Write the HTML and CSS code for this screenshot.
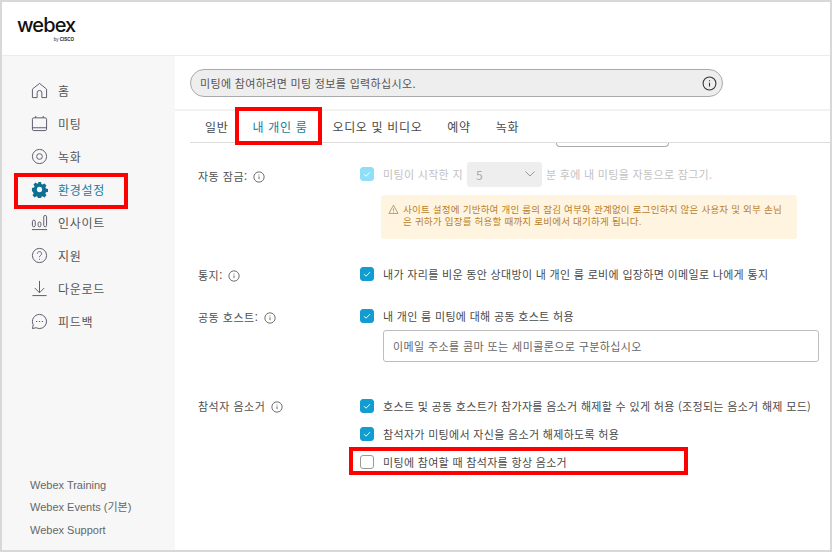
FILE: index.html
```html
<!DOCTYPE html>
<html lang="ko">
<head>
<meta charset="utf-8">
<title>Webex</title>
<link rel="stylesheet" href="styles.css">
</head>
<body>
<div class="app">
  <header class="top">
    <div class="logo"><span class="logo-word">webex</span><span class="logo-by">by <b>CISCO</b></span></div>
  </header>
  <aside class="side">
    <nav class="nav">
      <a class="nav-item"><svg class="nav-icon" viewBox="0 0 18 18"><path d="M1.500 16.500V7.500L9 1.500l7.500 6v9h-5v-5a2.500 2.500 0 0 0-5 0v5z"/></svg>홈</a>
      <a class="nav-item"><svg class="nav-icon" viewBox="0 0 18 18"><rect x="1.500" y="3" width="15" height="13.500" rx="1.500"/><path d="M1.500 13.500h15M5 1v2M13 1v2"/></svg>미팅</a>
      <a class="nav-item"><svg class="nav-icon" viewBox="0 0 18 18"><circle cx="9" cy="9" r="7.500"/><circle cx="9" cy="9" r="3"/></svg>녹화</a>
      <a class="nav-item active"><svg class="nav-icon gear" viewBox="0 0 18 18"><path fill-rule="evenodd" d="M7.400 1h3.200l.4 2.200 1.300.6 1.900-1.200 2.200 2.200-1.200 1.900.6 1.300 2.200.4v3.200l-2.200.4-.6 1.300 1.200 1.900-2.200 2.200-1.900-1.200-1.300.6-.4 2.200H7.400l-.4-2.200-1.300-.6-1.900 1.200-2.200-2.200 1.200-1.900-.6-1.300L1 10.600V7.400l2.200-.4.6-1.300-1.200-1.900 2.200-2.200 1.900 1.200 1.300-.6zM9 6.200a2.800 2.800 0 1 0 0 5.600 2.800 2.800 0 0 0 0-5.600z"/></svg>환경설정</a>
      <a class="nav-item"><svg class="nav-icon" viewBox="0 0 18 18"><path d="M1 16.500h16"/><rect x="1.500" y="6.500" width="3" height="7" rx="1.500"/><rect x="7.500" y="8.500" width="3" height="5" rx="1.500"/><rect x="13.500" y="1.500" width="3" height="12" rx="1.500"/></svg>인사이트</a>
      <a class="nav-item"><svg class="nav-icon" viewBox="0 0 18 18"><circle cx="9" cy="9" r="7.500"/><path d="M6.800 7a2.200 2.200 0 1 1 3.400 1.900c-.8.500-1.200 1-1.200 1.900"/><path d="M9 12.500v1"/></svg>지원</a>
      <a class="nav-item"><svg class="nav-icon" viewBox="0 0 18 18"><path d="M9 1v12.500M4 8.500l5 5 5-5M1.500 16.500h15"/></svg>다운로드</a>
      <a class="nav-item"><svg class="nav-icon" viewBox="0 0 18 18"><path d="M9 1.500a7.500 7.500 0 1 1-3.600 14.100L1.500 16.500l.9-3.900A7.500 7.500 0 0 1 9 1.500z"/><path class="dots" d="M5.800 9h.3M8.850 9h.3M11.900 9h.3"/></svg>피드백</a>
    </nav>
    <div class="side-links">
      <a>Webex Training</a>
      <a>Webex Events (기본)</a>
      <a>Webex Support</a>
    </div>
  </aside>
  <main class="main">
    <div class="search-wrap">
      <div class="search">
        <span>미팅에 참여하려면 미팅 정보를 입력하십시오.</span>
        <svg class="info info-lg" viewBox="0 0 14 14"><circle cx="7" cy="7" r="6"/><path d="M7 6.300v3.500M7 4v1"/></svg>
      </div>
    </div>
    <div class="tabs">
      <a class="tab">일반</a>
      <a class="tab tab-on">내 개인 룸</a>
      <a class="tab">오디오 및 비디오</a>
      <a class="tab">예약</a>
      <a class="tab">녹화</a>
    </div>
    <div class="content">
      <div class="peek"></div>
      <section class="row row-lock">
        <div class="label">자동 잠금: <svg class="info" viewBox="0 0 14 14"><circle cx="7" cy="7" r="6"/><path d="M7 6.300v3.200M7 4.200v1"/></svg></div>
        <div class="field">
          <div class="check-line off">
            <span class="box on dim"><svg viewBox="0 0 14 14"><path d="M3.500 7.200l2.400 2.400 4.600-4.800"/></svg></span>
            <span>미팅이 시작한 지</span>
            <span class="select"><span>5</span><svg viewBox="0 0 12 12"><path d="M1.500 3.500L6 8l4.500-4.500"/></svg></span>
            <span>분 후에 내 미팅을 자동으로 잠그기.</span>
          </div>
          <div class="warn">
            <svg class="warn-icon" viewBox="0 0 14 14"><path d="M7 1.500l5.800 10.500H1.200z"/><path d="M7 5.500v3.300M7 9.800v1"/></svg>
            <p>사이트 설정에 기반하여 개인 룸의 잠김 여부와 관계없이 로그인하지 않은 사용자 및 외부 손님은 귀하가 입장를 허용할 때까지 로비에서 대기하게 됩니다.</p>
          </div>
        </div>
      </section>
      <section class="row row-notify">
        <div class="label">통지: <svg class="info" viewBox="0 0 14 14"><circle cx="7" cy="7" r="6"/><path d="M7 6.300v3.200M7 4.200v1"/></svg></div>
        <div class="field">
          <div class="check-line">
            <span class="box on"><svg viewBox="0 0 14 14"><path d="M3.500 7.200l2.400 2.400 4.600-4.800"/></svg></span>
            <span>내가 자리를 비운 동안 상대방이 내 개인 룸 로비에 입장하면 이메일로 나에게 통지</span>
          </div>
        </div>
      </section>
      <section class="row row-cohost">
        <div class="label">공동 호스트: <svg class="info" viewBox="0 0 14 14"><circle cx="7" cy="7" r="6"/><path d="M7 6.300v3.200M7 4.200v1"/></svg></div>
        <div class="field">
          <div class="check-line">
            <span class="box on"><svg viewBox="0 0 14 14"><path d="M3.500 7.200l2.400 2.400 4.600-4.800"/></svg></span>
            <span>내 개인 룸 미팅에 대해 공동 호스트 허용</span>
          </div>
          <div class="text-input">이메일 주소를 콤마 또는 세미콜론으로 구분하십시오</div>
        </div>
      </section>
      <section class="row row-mute">
        <div class="label">참석자 음소거 <svg class="info" viewBox="0 0 14 14"><circle cx="7" cy="7" r="6"/><path d="M7 6.300v3.200M7 4.200v1"/></svg></div>
        <div class="field stack">
          <div class="check-line">
            <span class="box on"><svg viewBox="0 0 14 14"><path d="M3.500 7.200l2.400 2.400 4.600-4.800"/></svg></span>
            <span>호스트 및 공동 호스트가 참가자를 음소거 해제할 수 있게 허용 (조정되는 음소거 해제 모드)</span>
          </div>
          <div class="check-line">
            <span class="box on"><svg viewBox="0 0 14 14"><path d="M3.500 7.200l2.400 2.400 4.600-4.800"/></svg></span>
            <span>참석자가 미팅에서 자신을 음소거 해제하도록 허용</span>
          </div>
          <div class="check-line">
            <span class="box"></span>
            <span>미팅에 참여할 때 참석자를 항상 음소거</span>
          </div>
        </div>
      </section>
    </div>
  </main>
  <div class="mark mark-tab"></div>
  <div class="mark mark-nav"></div>
  <div class="mark mark-check"></div>
</div>
</body>
</html>
```
FILE: styles.css
```css
* { box-sizing: border-box; }
html, body { margin: 0; height: 100%; background: #fff; overflow: hidden; }
body { font-family: "Noto Sans CJK KR", "Liberation Sans", sans-serif; font-size: 11px; color: #4a4a4a; }
a { color: inherit; text-decoration: none; }
svg { display: block; fill: none; stroke: currentColor; stroke-width: 1; }

.app {
  position: relative;
  width: 832px; height: 552px;
  border: 2px solid #d8d8d8;
  display: grid;
  grid-template-columns: 173px 1fr;
  grid-template-rows: 54px 1fr;
  background: #fff;
}
.top { grid-column: 1 / 3; border-bottom: 1px solid #ececec; padding: 12px 0 0 15px; }
.logo { width: 58px; display: flex; flex-direction: column; }
.logo-word { font: 500 20px/22px Inter, "Liberation Sans", sans-serif; letter-spacing: -0.9px; color: #111; }
.logo-by { font: 4.500px/5px "Liberation Sans", sans-serif; color: #222; text-align: right; margin-top: 1px; padding-right: 1px; }

.side { background: #f7f7f7; display: flex; flex-direction: column; padding: 17.500px 0 11px 29px; min-height: 0; }
.nav { display: flex; flex-direction: column; }
.nav-item { height: 33px; display: flex; align-items: center; gap: 10px; font-size: 12px; letter-spacing: .7px; color: #555; }
.nav-icon { width: 17px; height: 17px; color: #5a5566; }
.nav-item.active { color: #177d9b; }
.gear { fill: #0f6f93; stroke: none; color: #0f6f93; }
.dots { stroke-linecap: round; stroke-width: 1.200; }
.side-links { margin-top: auto; margin-left: -1px; display: flex; flex-direction: column; gap: 5px; font: 11px/17.500px "Liberation Sans", "Noto Sans CJK KR", sans-serif; color: #666; }

.main { display: flex; flex-direction: column; min-width: 0; overflow: hidden; }
.search-wrap { padding: 13px 0 13px 15px; border-bottom: 2px solid #f2f2f2; height: 55px; flex: none; }
.search {
  width: 533px; height: 28px; border: 1px solid #a9a9a9; border-radius: 14px; background: #eeeeee;
  display: flex; align-items: center; justify-content: space-between; padding: 0 5px 0 9px;
  letter-spacing: .34px; color: #555;
}
.tabs { display: flex; gap: 25px; height: 32px; align-items: center; margin-left: 15px; padding-left: 15px; border-bottom: 1px solid #dcdcdc; flex: none; font-size: 12px; letter-spacing: .65px; color: #4a4a4a; }
.tab-on { color: #177d9b; letter-spacing: .7px; margin-left: -1px; }

.info { width: 12px; height: 12px; display: inline-block; vertical-align: -2px; margin-left: 2px; color: #555; }
.info-lg { width: 15px; height: 15px; color: #333; margin: 0; }

.content { flex: 1; min-height: 0; padding-left: 23px; }
.peek { width: 113px; height: 4px; margin-left: 358px; border: 1px solid #aaa; border-top: 0; border-radius: 0 0 4px 4px; }
.row { display: grid; grid-template-columns: 162px 1fr; letter-spacing: .32px; }
.label { color: #4f4f4f; letter-spacing: .5px; padding-top: 1px; }
.check-line { display: flex; align-items: center; gap: 9px; height: 16px; }
.check-line.off { color: #c2c2c2; gap: 4px; height: 24px; }
.off .box { margin-right: 5px; }
.box { width: 14px; height: 14px; border: 1px solid #999; border-radius: 3px; flex: none; background: #fff; color: #fff; }
.box svg { width: 12px; height: 12px; stroke-width: 1.100; }
.box.on { background: #129ccf; border-color: #129ccf; }
.box.dim { background: #8fdff9; border-color: #8fdff9; }
.select { width: 75px; height: 25px; background: #eeeeee; border-radius: 3px; display: flex; align-items: center; justify-content: space-between; padding: 0 6px 0 9px; font-size: 12px; color: #aaa; }
.select svg { width: 12px; height: 12px; color: #999; }
.warn { margin: 9px 0 0 21px; width: 416px; height: 44px; background: #fff4e0; border-radius: 3px; display: flex; gap: 4px; padding: 8px 12px 0 7px; color: #b8802a; font-size: 9.500px; line-height: 12px; letter-spacing: .24px; }
.warn p { margin: 0; }
.warn-icon { width: 11px; height: 11px; flex: none; margin-top: 1px; color: #a58a58; }
.text-input { margin: 6px 0 0 23px; width: 436px; height: 32px; border: 1px solid #bdbdbd; border-radius: 3px; padding: 0 9px; display: flex; align-items: center; color: #666; letter-spacing: .4px; }
.row-lock { padding-top: 15px; }
.row-lock .label { padding-top: 6px; }
.row-notify { margin-top: 27px; }
.row-cohost { margin-top: 25px; }
.row-mute { margin-top: 36px; }
.row-mute .label { padding-top: 0; }
.stack { display: flex; flex-direction: column; gap: 12px; }

.mark { position: absolute; border: 4px solid #f00; pointer-events: none; }
.mark-tab { left: 233px; top: 105px; width: 87px; height: 38px; }
.mark-nav { left: 12px; top: 171px; width: 114px; height: 36px; }
.mark-check { left: 347px; top: 445px; width: 339px; height: 28px; }
```
